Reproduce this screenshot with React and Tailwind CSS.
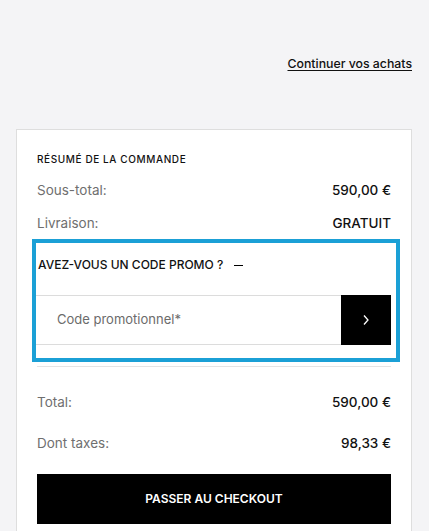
const Row = ({ label, value, className = "" }) => (
  <div className={`flex h-5 items-center justify-between text-[13.5px] leading-5 ${className}`}>
    <span className="text-[#6f6f6f]">{label}</span>
    <span className="font-medium text-[#111]">{value}</span>
  </div>
);

const App = () => {
  return (
    <div className="min-h-screen bg-[#f4f4f6] pl-4 pr-[17px] font-['Inter',sans-serif] text-[#111]">
      <div className="flex justify-end pt-[56px]">
        <a href="#" className="text-[12.3px] font-medium leading-4 text-[#111] underline underline-offset-2">
          Continuer vos achats
        </a>
      </div>

      <div className="mt-[57px] border border-[#dedede] bg-white px-5 pb-6 pt-[22px]">
        <h2 className="text-[10px] font-medium uppercase leading-[14px] tracking-[0.06em]">
          Résumé de la commande
        </h2>

        <Row label="Sous-total:" value="590,00 €" className="mt-[14px]" />
        <Row label="Livraison:" value="GRATUIT" className="mt-[13px]" />

        <div className="ml-[-5px] mr-[-9px] mt-[6px] border-4 border-[#1ba0d6] pb-[13px] pt-[14px]">
          <div className="flex items-center pl-[2px] text-[12px] font-medium uppercase leading-4">
            <span>Avez-vous un code promo ?</span>
            <span className="ml-[11px] h-px w-[9px] bg-black" />
          </div>
          <div className="mr-[5px] mt-[22px] flex h-[50px]">
            <div className="flex flex-1 items-center border-y border-[#dcdcdc] pl-[21px] text-[13px] text-[#6b6b6b]">
              Code promotionnel*
            </div>
            <button className="flex w-[50px] items-center justify-center bg-black">
              <svg width="8" height="12" viewBox="0 0 8 12" fill="none">
                <path d="M2 1.5L6 6L2 10.5" stroke="white" strokeWidth="1.3" />
              </svg>
            </button>
          </div>
        </div>

        <div className="mt-[4px] h-px bg-[#e4e4e4]" />

        <Row label="Total:" value="590,00 €" className="mt-[25px]" />
        <Row label="Dont taxes:" value="98,33 €" className="mt-[21px]" />

        <button className="mt-[21px] flex h-[50px] w-full items-center justify-center bg-black text-[12px] font-semibold uppercase text-white">
          Passer au checkout
        </button>
      </div>
    </div>
  );
};

export default App;
